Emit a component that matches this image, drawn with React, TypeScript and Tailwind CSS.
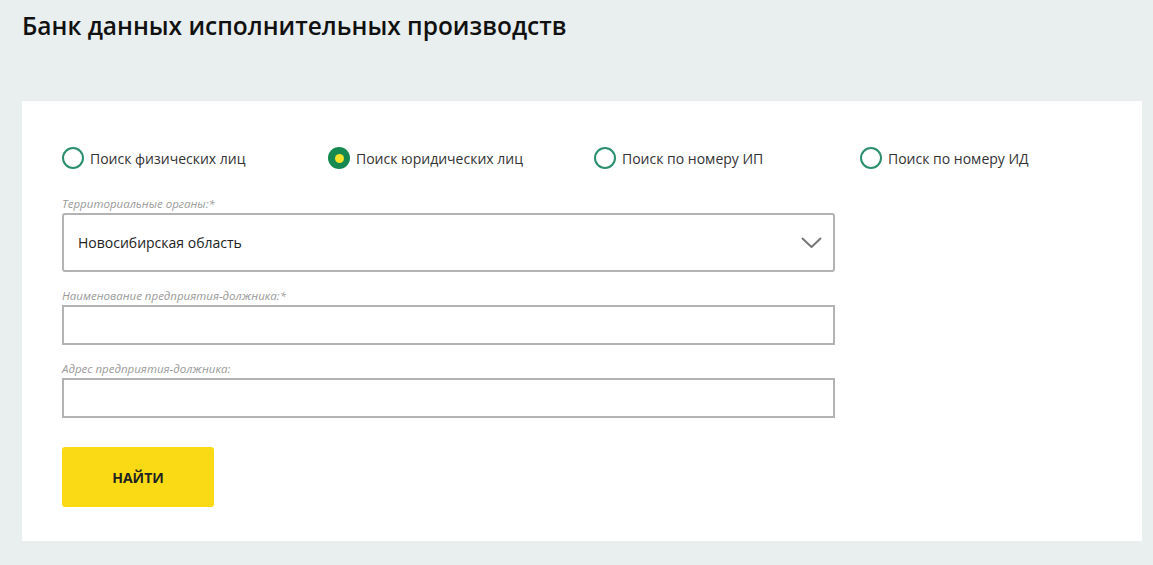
const options = [
  "Поиск физических лиц",
  "Поиск юридических лиц",
  "Поиск по номеру ИП",
  "Поиск по номеру ИД",
];

function Radio({ label, checked }: { label: string; checked?: boolean }) {
  return (
    <label className="flex items-center gap-[6px] w-[266px] cursor-pointer">
      {checked ? (
        <span className="w-[22px] h-[22px] rounded-full bg-[#15894f] flex items-center justify-center">
          <span className="w-[9px] h-[9px] rounded-full bg-[#f4e22b]" />
        </span>
      ) : (
        <span className="w-[22px] h-[22px] rounded-full border-2 border-[#2b8f6d] bg-white" />
      )}
      <span className="text-[14px] text-[#333]">{label}</span>
    </label>
  );
}

function Field({ label, children }: { label: string; children: React.ReactNode }) {
  return (
    <div className="w-[773px]">
      <div className="text-[11.5px] italic text-[#9a9a9a] leading-[14px] mb-[2px]">{label}</div>
      {children}
    </div>
  );
}

export default function App() {
  return (
    <div
      className="min-h-screen bg-[#e9eeee] pl-[22px] pr-[11px] pt-[9px] pb-[24px]"
      style={{ fontFamily: '"Open Sans", "Noto Sans", sans-serif' }}
    >
      <h1 className="text-[24.5px] font-semibold leading-[34px] text-[#111] h-[92px]">
        Банк данных исполнительных производств
      </h1>

      <div className="bg-white h-[440px] pl-[40px] pt-[46px]">
        <div className="flex">
          {options.map((o, i) => (
            <Radio key={o} label={o} checked={i === 1} />
          ))}
        </div>

        <div className="mt-[28px] flex flex-col gap-[17px]">
          <Field label="Территориальные органы:*">
            <div className="h-[59px] border-2 border-[#b3b3b3] rounded-[3px] flex items-center justify-between pl-[14px] pr-[11px]">
              <span className="text-[14px] text-[#222]">Новосибирская область</span>
              <svg width="21" height="12" viewBox="0 0 21 12" fill="none">
                <path d="M1.5 1.5 L10.5 10 L19.5 1.5" stroke="#777" strokeWidth="2" strokeLinecap="round" strokeLinejoin="round" />
              </svg>
            </div>
          </Field>

          <Field label="Наименование предприятия-должника:*">
            <input className="w-full h-[40px] border-2 border-[#b3b3b3] outline-none px-3 text-[14px]" />
          </Field>

          <Field label="Адрес предприятия-должника:">
            <input className="w-full h-[40px] border-2 border-[#b3b3b3] outline-none px-3 text-[14px]" />
          </Field>
        </div>

        <button className="mt-[29px] w-[152px] h-[60px] bg-[#f9da14] rounded-[3px] text-[14px] font-bold text-[#222]">
          НАЙТИ
        </button>
      </div>
    </div>
  );
}
